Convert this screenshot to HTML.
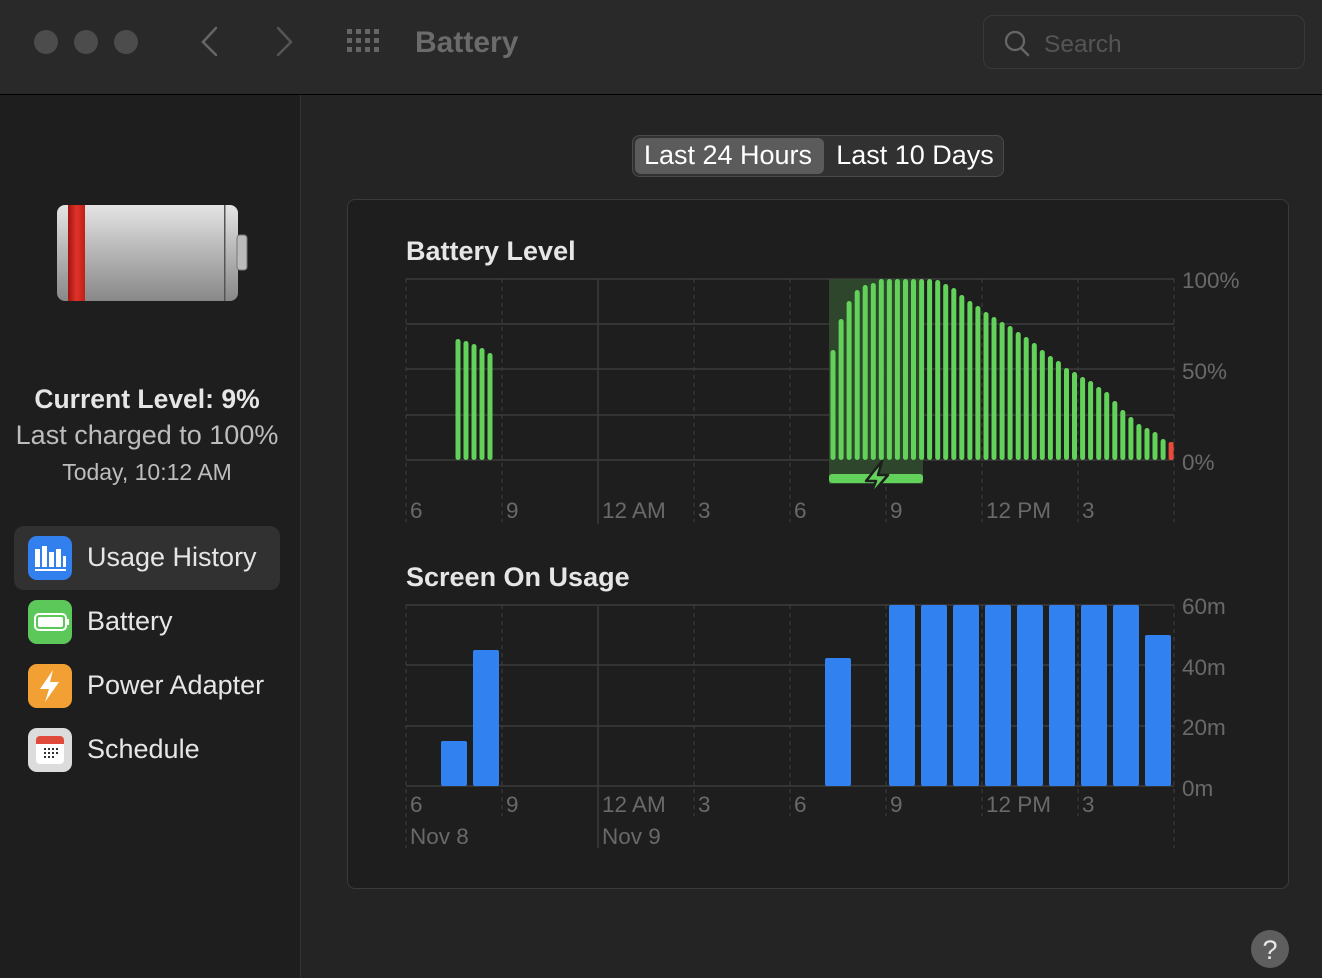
<!DOCTYPE html>
<html><head><meta charset="utf-8"><style>
body{margin:0;width:1322px;height:978px;background:#252425;font-family:"Liberation Sans",sans-serif;overflow:hidden;position:relative}
</style></head><body>
<div style="position:absolute;left:0;top:0;width:1322px;height:94px;background:#2a292a;border-bottom:1px solid #000"></div>
<div style="position:absolute;left:0;top:95px;width:300px;height:883px;background:#1f1e1f;border-right:1px solid #363536"></div>
<div style="position:absolute;left:347px;top:199px;width:940px;height:688px;background:#1f1e1f;border:1px solid #3b3a3b;border-radius:8px"></div>
<svg width="1322" height="978" style="position:absolute;left:0;top:0" xmlns="http://www.w3.org/2000/svg" font-family="Liberation Sans, sans-serif">
<circle cx="46" cy="42" r="12" fill="#4d4c4d"/><circle cx="86" cy="42" r="12" fill="#4d4c4d"/><circle cx="126" cy="42" r="12" fill="#4d4c4d"/>
<path d="M216 28 L203 42 L216 55" stroke="#666" stroke-width="2.5" fill="none" stroke-linecap="round"/>
<path d="M278 28 L291 42 L278 55" stroke="#555" stroke-width="2.5" fill="none" stroke-linecap="round"/>
<g fill="#666">
<rect x="347" y="29" width="5" height="5"/><rect x="356" y="29" width="5" height="5"/><rect x="365" y="29" width="5" height="5"/><rect x="374" y="29" width="5" height="5"/>
<rect x="347" y="38" width="5" height="5"/><rect x="356" y="38" width="5" height="5"/><rect x="365" y="38" width="5" height="5"/><rect x="374" y="38" width="5" height="5"/>
<rect x="347" y="47" width="5" height="5"/><rect x="356" y="47" width="5" height="5"/><rect x="365" y="47" width="5" height="5"/><rect x="374" y="47" width="5" height="5"/>
</g>
<text x="415" y="52" font-size="30" font-weight="bold" fill="#6c6b6c">Battery</text>
<rect x="983.5" y="15.5" width="321" height="53" rx="9" fill="none" stroke="#3a393a"/>
<circle cx="1015" cy="41" r="9" fill="none" stroke="#666" stroke-width="2.3"/><path d="M1021 48 L1028 55" stroke="#666" stroke-width="2.5" stroke-linecap="round"/>
<text x="1044" y="52" font-size="24.5" fill="#555">Search</text>
<rect x="632.5" y="135.5" width="371" height="41" rx="7" fill="#323132" stroke="#4a494a"/>
<rect x="635" y="138" width="189" height="36" rx="6" fill="#5c5b5c"/>
<text x="728" y="164" font-size="27" fill="#fff" text-anchor="middle">Last 24 Hours</text>
<text x="915" y="164" font-size="27" fill="#fff" text-anchor="middle">Last 10 Days</text>
<defs>
<linearGradient id="bg" x1="0" y1="0" x2="0" y2="1"><stop offset="0" stop-color="#e4e4e4"/><stop offset="0.5" stop-color="#b5b5b5"/><stop offset="1" stop-color="#888"/></linearGradient>
<linearGradient id="rg" x1="0" y1="0" x2="1" y2="0"><stop offset="0" stop-color="#a0140e"/><stop offset="0.5" stop-color="#e0332a"/><stop offset="1" stop-color="#c02018"/></linearGradient>
</defs>
<rect x="57" y="205" width="181" height="96" rx="8" fill="url(#bg)"/>
<rect x="68" y="205" width="17" height="96" fill="url(#rg)"/>
<rect x="224" y="205" width="1.5" height="96" fill="#555"/>
<rect x="237" y="235" width="10" height="35" rx="3" fill="#bbb" stroke="#777"/>
<rect x="14" y="526" width="266" height="64" rx="10" fill="#323132"/>
<rect x="28" y="536" width="44" height="44" rx="9" fill="#3280ee"/>
<g fill="#fff"><rect x="35" y="549" width="5" height="18"/><rect x="42" y="546" width="5" height="21"/><rect x="49" y="552" width="5" height="15"/><rect x="56" y="549" width="5" height="18"/><rect x="63" y="556" width="3" height="11"/><rect x="35" y="569" width="31" height="2"/></g>
<rect x="28" y="600" width="44" height="44" rx="9" fill="#5cc85a"/>
<rect x="35" y="614" width="31" height="16" rx="4" fill="none" stroke="#fff" stroke-width="2"/><rect x="38" y="617" width="25" height="10" rx="2" fill="#fff"/><rect x="67" y="619" width="2" height="6" fill="#fff"/>
<rect x="28" y="664" width="44" height="44" rx="9" fill="#f2a033"/>
<path d="M53 670 L40 689 L49 689 L45 702 L59 682 L50 682 Z" fill="#fff"/>
<rect x="28" y="728" width="44" height="44" rx="9" fill="#dcdcdc"/>
<rect x="36" y="736" width="28" height="28" rx="4" fill="#fff"/><path d="M36 744 V740 a4 4 0 0 1 4 -4 H60 a4 4 0 0 1 4 4 V744 Z" fill="#df4a3a"/>
<g fill="#333"><rect x="44" y="748" width="2" height="2"/><rect x="48" y="748" width="2" height="2"/><rect x="52" y="748" width="2" height="2"/><rect x="56" y="748" width="2" height="2"/><rect x="44" y="752" width="2" height="2"/><rect x="48" y="752" width="2" height="2"/><rect x="52" y="752" width="2" height="2"/><rect x="56" y="752" width="2" height="2"/><rect x="44" y="756" width="2" height="2"/><rect x="48" y="756" width="2" height="2"/><rect x="52" y="756" width="2" height="2"/></g>
<g font-size="27" fill="#e6e6e6">
<text x="87" y="566">Usage History</text>
<text x="87" y="630">Battery</text>
<text x="87" y="694">Power Adapter</text>
<text x="87" y="758">Schedule</text>
</g>
<text x="147" y="408" font-size="26.5" font-weight="bold" fill="#e6e6e6" text-anchor="middle">Current Level: 9%</text>
<text x="147" y="444" font-size="27" fill="#bdbdbd" text-anchor="middle">Last charged to 100%</text>
<text x="147" y="480" font-size="23" fill="#bdbdbd" text-anchor="middle">Today, 10:12 AM</text>
<text x="406" y="260" font-size="27" font-weight="bold" fill="#e6e6e6">Battery Level</text>
<g stroke="#3c3b3c" stroke-width="1.5"><line x1="406" y1="279" x2="1174" y2="279"/><line x1="406" y1="324" x2="1174" y2="324"/><line x1="406" y1="369" x2="1174" y2="369"/><line x1="406" y1="415" x2="1174" y2="415"/><line x1="406" y1="460" x2="1174" y2="460"/></g>
<g stroke="#3c3b3c" stroke-width="1.2" stroke-dasharray="4 4"><line x1="406" y1="279" x2="406" y2="522"/><line x1="502" y1="279" x2="502" y2="522"/><line x1="694" y1="279" x2="694" y2="522"/><line x1="790" y1="279" x2="790" y2="522"/><line x1="886" y1="279" x2="886" y2="522"/><line x1="982" y1="279" x2="982" y2="522"/><line x1="1078" y1="279" x2="1078" y2="522"/><line x1="1174" y1="279" x2="1174" y2="522"/></g>
<line x1="598" y1="279" x2="598" y2="524" stroke="#3c3b3c" stroke-width="1.5"/>
<rect x="829" y="279" width="94" height="205" fill="#2f4a2d" opacity="0.9"/>
<rect x="829" y="474" width="94" height="9" rx="3" fill="#62d25a"/>
<path d="M882 461 L866 481 L876 481 L870 496 L888 475 L878 475 Z" fill="#62d25a" stroke="#1f1e1f" stroke-width="2.5" stroke-linejoin="round"/>
<g fill="#62d25a">
<rect x="455.5" y="339" width="5" height="121" rx="2.5"/><rect x="463.5" y="341" width="5" height="119" rx="2.5"/><rect x="471.5" y="344" width="5" height="116" rx="2.5"/><rect x="479.5" y="348" width="5" height="112" rx="2.5"/><rect x="487.5" y="353" width="5" height="107" rx="2.5"/>
<rect x="830.5" y="350" width="5" height="110" rx="2.5"/><rect x="838.6" y="319" width="5" height="141" rx="2.5"/><rect x="846.6" y="301" width="5" height="159" rx="2.5"/><rect x="854.7" y="290" width="5" height="170" rx="2.5"/><rect x="862.7" y="285" width="5" height="175" rx="2.5"/><rect x="870.8" y="283" width="5" height="177" rx="2.5"/>
<rect x="878.8" y="279" width="5" height="181" rx="2.5"/><rect x="886.9" y="279" width="5" height="181" rx="2.5"/><rect x="894.9" y="279" width="5" height="181" rx="2.5"/><rect x="903" y="279" width="5" height="181" rx="2.5"/><rect x="911" y="279" width="5" height="181" rx="2.5"/><rect x="919.1" y="279" width="5" height="181" rx="2.5"/><rect x="927.1" y="279" width="5" height="181" rx="2.5"/>
<rect x="935.2" y="280" width="5" height="180" rx="2.5"/><rect x="943.2" y="284" width="5" height="176" rx="2.5"/><rect x="951.3" y="288" width="5" height="172" rx="2.5"/><rect x="959.3" y="295" width="5" height="165" rx="2.5"/><rect x="967.4" y="301" width="5" height="159" rx="2.5"/><rect x="975.4" y="306" width="5" height="154" rx="2.5"/><rect x="983.5" y="312" width="5" height="148" rx="2.5"/><rect x="991.5" y="317" width="5" height="143" rx="2.5"/><rect x="999.6" y="322" width="5" height="138" rx="2.5"/><rect x="1007.6" y="326" width="5" height="134" rx="2.5"/><rect x="1015.7" y="332" width="5" height="128" rx="2.5"/><rect x="1023.7" y="337" width="5" height="123" rx="2.5"/><rect x="1031.8" y="343" width="5" height="117" rx="2.5"/><rect x="1039.8" y="350" width="5" height="110" rx="2.5"/><rect x="1047.9" y="356" width="5" height="104" rx="2.5"/><rect x="1055.9" y="361" width="5" height="99" rx="2.5"/><rect x="1064" y="368" width="5" height="92" rx="2.5"/><rect x="1072" y="372" width="5" height="88" rx="2.5"/><rect x="1080.1" y="377" width="5" height="83" rx="2.5"/><rect x="1088.1" y="381" width="5" height="79" rx="2.5"/><rect x="1096.2" y="387" width="5" height="73" rx="2.5"/><rect x="1104.2" y="392" width="5" height="68" rx="2.5"/><rect x="1112.3" y="401" width="5" height="59" rx="2.5"/><rect x="1120.3" y="410" width="5" height="50" rx="2.5"/><rect x="1128.4" y="417" width="5" height="43" rx="2.5"/><rect x="1136.4" y="424" width="5" height="36" rx="2.5"/><rect x="1144.5" y="428" width="5" height="32" rx="2.5"/><rect x="1152.5" y="432" width="5" height="28" rx="2.5"/><rect x="1160.6" y="439" width="5" height="21" rx="2.5"/>
</g>
<rect x="1168.6" y="442" width="5" height="18" rx="2" fill="#eb4a3a"/>
<g font-size="22.5" fill="#6a696a">
<text x="1182" y="288">100%</text><text x="1182" y="379">50%</text><text x="1182" y="470">0%</text>
<text x="410" y="518">6</text><text x="506" y="518">9</text><text x="602" y="518">12 AM</text><text x="698" y="518">3</text><text x="794" y="518">6</text><text x="890" y="518">9</text><text x="986" y="518">12 PM</text><text x="1082" y="518">3</text>
</g>
<text x="406" y="586" font-size="27" font-weight="bold" fill="#e6e6e6">Screen On Usage</text>
<g stroke="#3c3b3c" stroke-width="1.5"><line x1="406" y1="605" x2="1174" y2="605"/><line x1="406" y1="665" x2="1174" y2="665"/><line x1="406" y1="726" x2="1174" y2="726"/><line x1="406" y1="786" x2="1174" y2="786"/></g>
<g stroke="#3c3b3c" stroke-width="1.2" stroke-dasharray="4 4"><line x1="406" y1="605" x2="406" y2="848"/><line x1="502" y1="605" x2="502" y2="816"/><line x1="694" y1="605" x2="694" y2="816"/><line x1="790" y1="605" x2="790" y2="816"/><line x1="886" y1="605" x2="886" y2="816"/><line x1="982" y1="605" x2="982" y2="816"/><line x1="1078" y1="605" x2="1078" y2="816"/><line x1="1174" y1="605" x2="1174" y2="848"/></g>
<line x1="598" y1="605" x2="598" y2="848" stroke="#3c3b3c" stroke-width="1.5"/>
<g fill="#3281f0">
<rect x="441" y="741" width="26" height="45" rx="2"/><rect x="473" y="650" width="26" height="136" rx="2"/><rect x="825" y="658" width="26" height="128" rx="2"/>
<rect x="889" y="605" width="26" height="181" rx="2"/><rect x="921" y="605" width="26" height="181" rx="2"/><rect x="953" y="605" width="26" height="181" rx="2"/><rect x="985" y="605" width="26" height="181" rx="2"/><rect x="1017" y="605" width="26" height="181" rx="2"/><rect x="1049" y="605" width="26" height="181" rx="2"/><rect x="1081" y="605" width="26" height="181" rx="2"/><rect x="1113" y="605" width="26" height="181" rx="2"/><rect x="1145" y="635" width="26" height="151" rx="2"/>
</g>
<g font-size="22.5" fill="#6a696a">
<text x="1182" y="614">60m</text><text x="1182" y="675">40m</text><text x="1182" y="735">20m</text><text x="1182" y="796">0m</text>
<text x="410" y="812">6</text><text x="506" y="812">9</text><text x="602" y="812">12 AM</text><text x="698" y="812">3</text><text x="794" y="812">6</text><text x="890" y="812">9</text><text x="986" y="812">12 PM</text><text x="1082" y="812">3</text>
<text x="410" y="844">Nov 8</text><text x="602" y="844">Nov 9</text>
</g>
<circle cx="1270" cy="949" r="19" fill="#5f5e5f"/>
<text x="1270" y="959" font-size="27" fill="#e6e6e6" text-anchor="middle">?</text>
</svg>
</body></html>
